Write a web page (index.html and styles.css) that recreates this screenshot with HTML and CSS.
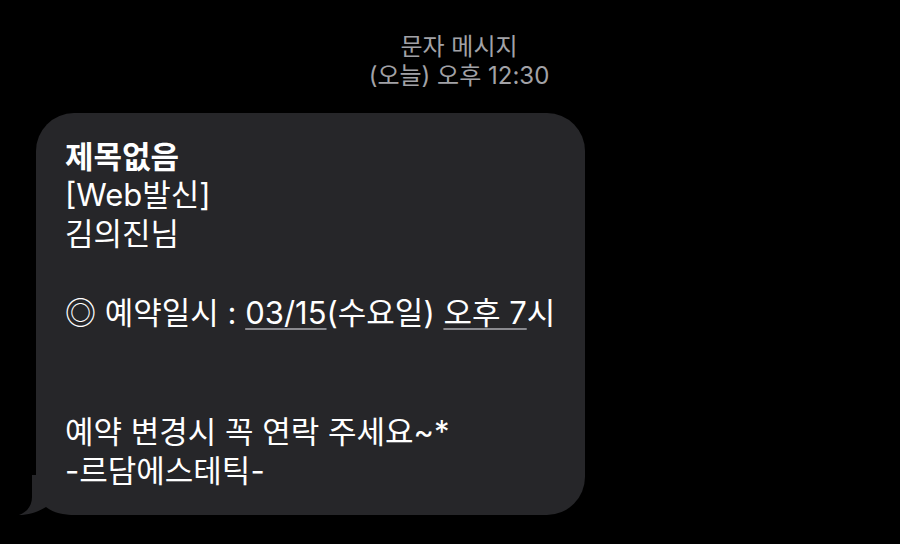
FILE: index.html
```html
<!DOCTYPE html>
<html lang="ko">
<head>
<meta charset="utf-8">
<link rel="stylesheet" href="styles.css">
</head>
<body>
<div class="screen">
  <header class="meta">
    <div class="meta-title">문자 메시지</div>
    <div class="meta-time">(오늘) 오후 12:30</div>
  </header>
  <div class="bubble-wrap">
    <div class="bubble">
      <div class="line title">제목없음</div>
      <div class="line">[Web발신]</div>
      <div class="line">김의진님</div>
      <div class="line blank"></div>
      <div class="line">◎ 예약일시 : <span class="link">03/15</span>(수요일) <span class="link">오후 7</span>시</div>
      <div class="line blank"></div>
      <div class="line blank"></div>
      <div class="line">예약 변경시 꼭 연락 주세요~*</div>
      <div class="line">-르담에스테틱-</div>
    </div>
    <svg class="tail" width="60" height="40" viewBox="0 0 60 40" aria-hidden="true">
      <path d="M16 0 L16 22 C16 31 11 37 3 40 C12 40 22 37 30 32 C36 37 46 40 60 40 L60 0 Z" fill="#262629"/>
    </svg>
  </div>
</div>
</body>
</html>
```
FILE: styles.css
```css
html, body {
  margin: 0;
  padding: 0;
  background: #000;
}
body {
  font-family: "Inter", "Noto Sans CJK KR", sans-serif;
  color: #fff;
}
.screen {
  width: 900px;
  height: 544px;
  overflow: hidden;
}
.meta {
  padding-top: 29px;
  padding-left: 18px;
  text-align: center;
  color: #a2a2a7;
  font-size: 24px;
  line-height: 31px;
  font-family: "Noto Sans CJK KR", sans-serif;
}
.meta-time {
  font-family: "Inter", "Noto Sans CJK KR", sans-serif;
}
.bubble-wrap {
  position: relative;
  margin-top: 22px;
  margin-left: 36px;
  width: 549px;
}
.bubble {
  background: #262629;
  border-radius: 38px;
  padding: 22px 20px 24px 29px;
  height: 402px;
  box-sizing: border-box;
  font-size: 31px;
  line-height: 39.5px;
}
.line {
  white-space: nowrap;
}
.blank {
  height: 39.5px;
}
.title {
  font-weight: 700;
  font-family: "Noto Sans CJK KR", sans-serif;
}
.link {
  text-decoration: underline;
  text-decoration-color: #8a8a8f;
  text-decoration-thickness: 1.5px;
  text-underline-offset: 4px;
}
.tail {
  position: absolute;
  left: -20px;
  bottom: 0;
  display: block;
}
```
